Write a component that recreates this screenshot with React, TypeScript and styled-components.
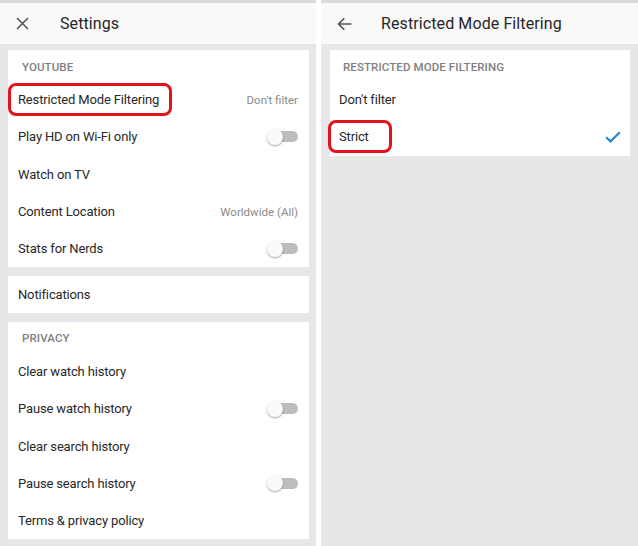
import styled, { createGlobalStyle } from "styled-components";

const GlobalStyle = createGlobalStyle`
  html, body {
    margin: 0;
    padding: 0;
    background: #ffffff;
  }
  body {
    font-family: Roboto, "Noto Sans", "Liberation Sans", sans-serif;
    -webkit-font-smoothing: antialiased;
  }
`;

const Page = styled.div`
  display: flex;
  justify-content: space-between;
  width: 638px;
  height: 546px;
  background: #ffffff;
  overflow: hidden;
`;

const Panel = styled.div<{ $width: number; $pad: string }>`
  display: flex;
  flex-direction: column;
  width: ${(p) => p.$width}px;
  height: 100%;
  background: #e7e7e7;
  border-top: 3px solid #dadada;
  box-sizing: border-box;

  & > main {
    padding: ${(p) => p.$pad};
  }
`;

const Header = styled.header<{ $gap: number }>`
  display: flex;
  align-items: center;
  gap: ${(p) => p.$gap}px;
  height: 41px;
  padding-left: 16px;
  background: #f9f9f9;
  flex-shrink: 0;
`;

const Title = styled.h1`
  margin: 0;
  font-size: 16px;
  font-weight: 400;
  color: #262626;
  letter-spacing: 0.1px;
`;

const Content = styled.main`
  display: flex;
  flex-direction: column;
  gap: 8.5px;
`;

const Card = styled.section`
  display: flex;
  flex-direction: column;
  background: #ffffff;
`;

const SectionTitle = styled.div<{ $indent: number }>`
  display: flex;
  align-items: center;
  height: 31px;
  padding: 2px 0 0 ${(p) => p.$indent}px;
  box-sizing: border-box;
  font-size: 11.5px;
  font-weight: 500;
  color: #808080;
  letter-spacing: 0.1px;
  text-transform: uppercase;
`;

const Row = styled.div<{ $indent: number; $right: number }>`
  display: flex;
  align-items: center;
  justify-content: space-between;
  height: 37.3px;
  padding: 0 ${(p) => p.$right}px 0 ${(p) => p.$indent}px;
  box-sizing: border-box;
`;

const Label = styled.span`
  position: relative;
  font-size: 13px;
  letter-spacing: -0.15px;
  color: #282828;
`;

const Highlight = styled.span<{ $l: number; $r: number }>`
  position: absolute;
  top: -9px;
  bottom: -9px;
  left: -${(p) => p.$l}px;
  right: -${(p) => p.$r}px;
  border: 3.5px solid #e3131b;
  border-radius: 8px;
  pointer-events: none;
`;

const Value = styled.span`
  font-size: 11.5px;
  color: #8a8a8a;
`;

const Track = styled.span`
  position: relative;
  display: inline-block;
  width: 28px;
  height: 11px;
  margin-left: 3px;
  border-radius: 6px;
  background: #bdbdbd;
`;

const Thumb = styled.span`
  position: absolute;
  left: -3px;
  top: 50%;
  width: 16px;
  height: 16px;
  margin-top: -8px;
  border-radius: 50%;
  background: #fafafa;
  box-shadow: 0 1px 2px rgba(0, 0, 0, 0.35);
`;

const Toggle = () => (
  <Track>
    <Thumb />
  </Track>
);

const CloseIcon = () => (
  <svg width="13" height="13" viewBox="0 0 13 13">
    <path d="M1 1L12 12M12 1L1 12" stroke="#555" strokeWidth="1.6" fill="none" />
  </svg>
);

const BackIcon = () => (
  <svg width="15" height="14" viewBox="0 0 15 14">
    <path d="M14.5 7H1.8M7.3 1.3L1.5 7l5.8 5.7" stroke="#555" strokeWidth="1.6" fill="none" />
  </svg>
);

const CheckIcon = () => (
  <svg width="16" height="12" viewBox="0 0 16 12">
    <path d="M1.2 6.2L5.6 10.4L14.8 1.2" stroke="#2a86cc" strokeWidth="2.2" fill="none" />
  </svg>
);

type Item = { label: string; value?: string; toggle?: boolean; mark?: [number, number] };

const youtube: Item[] = [
  { label: "Restricted Mode Filtering", value: "Don't filter", mark: [10, 13] },
  { label: "Play HD on Wi-Fi only", toggle: true },
  { label: "Watch on TV" },
  { label: "Content Location", value: "Worldwide (All)" },
  { label: "Stats for Nerds", toggle: true },
];

const privacy: Item[] = [
  { label: "Clear watch history" },
  { label: "Pause watch history", toggle: true },
  { label: "Clear search history" },
  { label: "Pause search history", toggle: true },
  { label: "Terms & privacy policy" },
];

const SettingsRow = ({ item }: { item: Item }) => (
  <Row $indent={10} $right={11}>
    <Label>
      {item.label}
      {item.mark && <Highlight $l={item.mark[0]} $r={item.mark[1]} />}
    </Label>
    {item.value && <Value>{item.value}</Value>}
    {item.toggle && <Toggle />}
  </Row>
);

export default function App() {
  return (
    <>
      <GlobalStyle />
      <Page>
        <Panel $width={316} $pad="6px 7px 0 8px">
          <Header $gap={31}>
            <CloseIcon />
            <Title>Settings</Title>
          </Header>
          <Content>
            <Card>
              <SectionTitle $indent={14}>YouTube</SectionTitle>
              {youtube.map((item) => (
                <SettingsRow key={item.label} item={item} />
              ))}
            </Card>
            <Card>
              <SettingsRow item={{ label: "Notifications" }} />
            </Card>
            <Card>
              <SectionTitle $indent={14}>Privacy</SectionTitle>
              {privacy.map((item) => (
                <SettingsRow key={item.label} item={item} />
              ))}
            </Card>
          </Content>
        </Panel>
        <Panel $width={317} $pad="6px 8px 0 9px">
          <Header $gap={29}>
            <BackIcon />
            <Title>Restricted Mode Filtering</Title>
          </Header>
          <Content>
            <Card>
              <SectionTitle $indent={13}>Restricted Mode Filtering</SectionTitle>
              <Row $indent={9} $right={9}>
                <Label>Don't filter</Label>
              </Row>
              <Row $indent={9} $right={9}>
                <Label>
                  Strict
                  <Highlight $l={11} $r={23} />
                </Label>
                <CheckIcon />
              </Row>
            </Card>
          </Content>
        </Panel>
      </Page>
    </>
  );
}
